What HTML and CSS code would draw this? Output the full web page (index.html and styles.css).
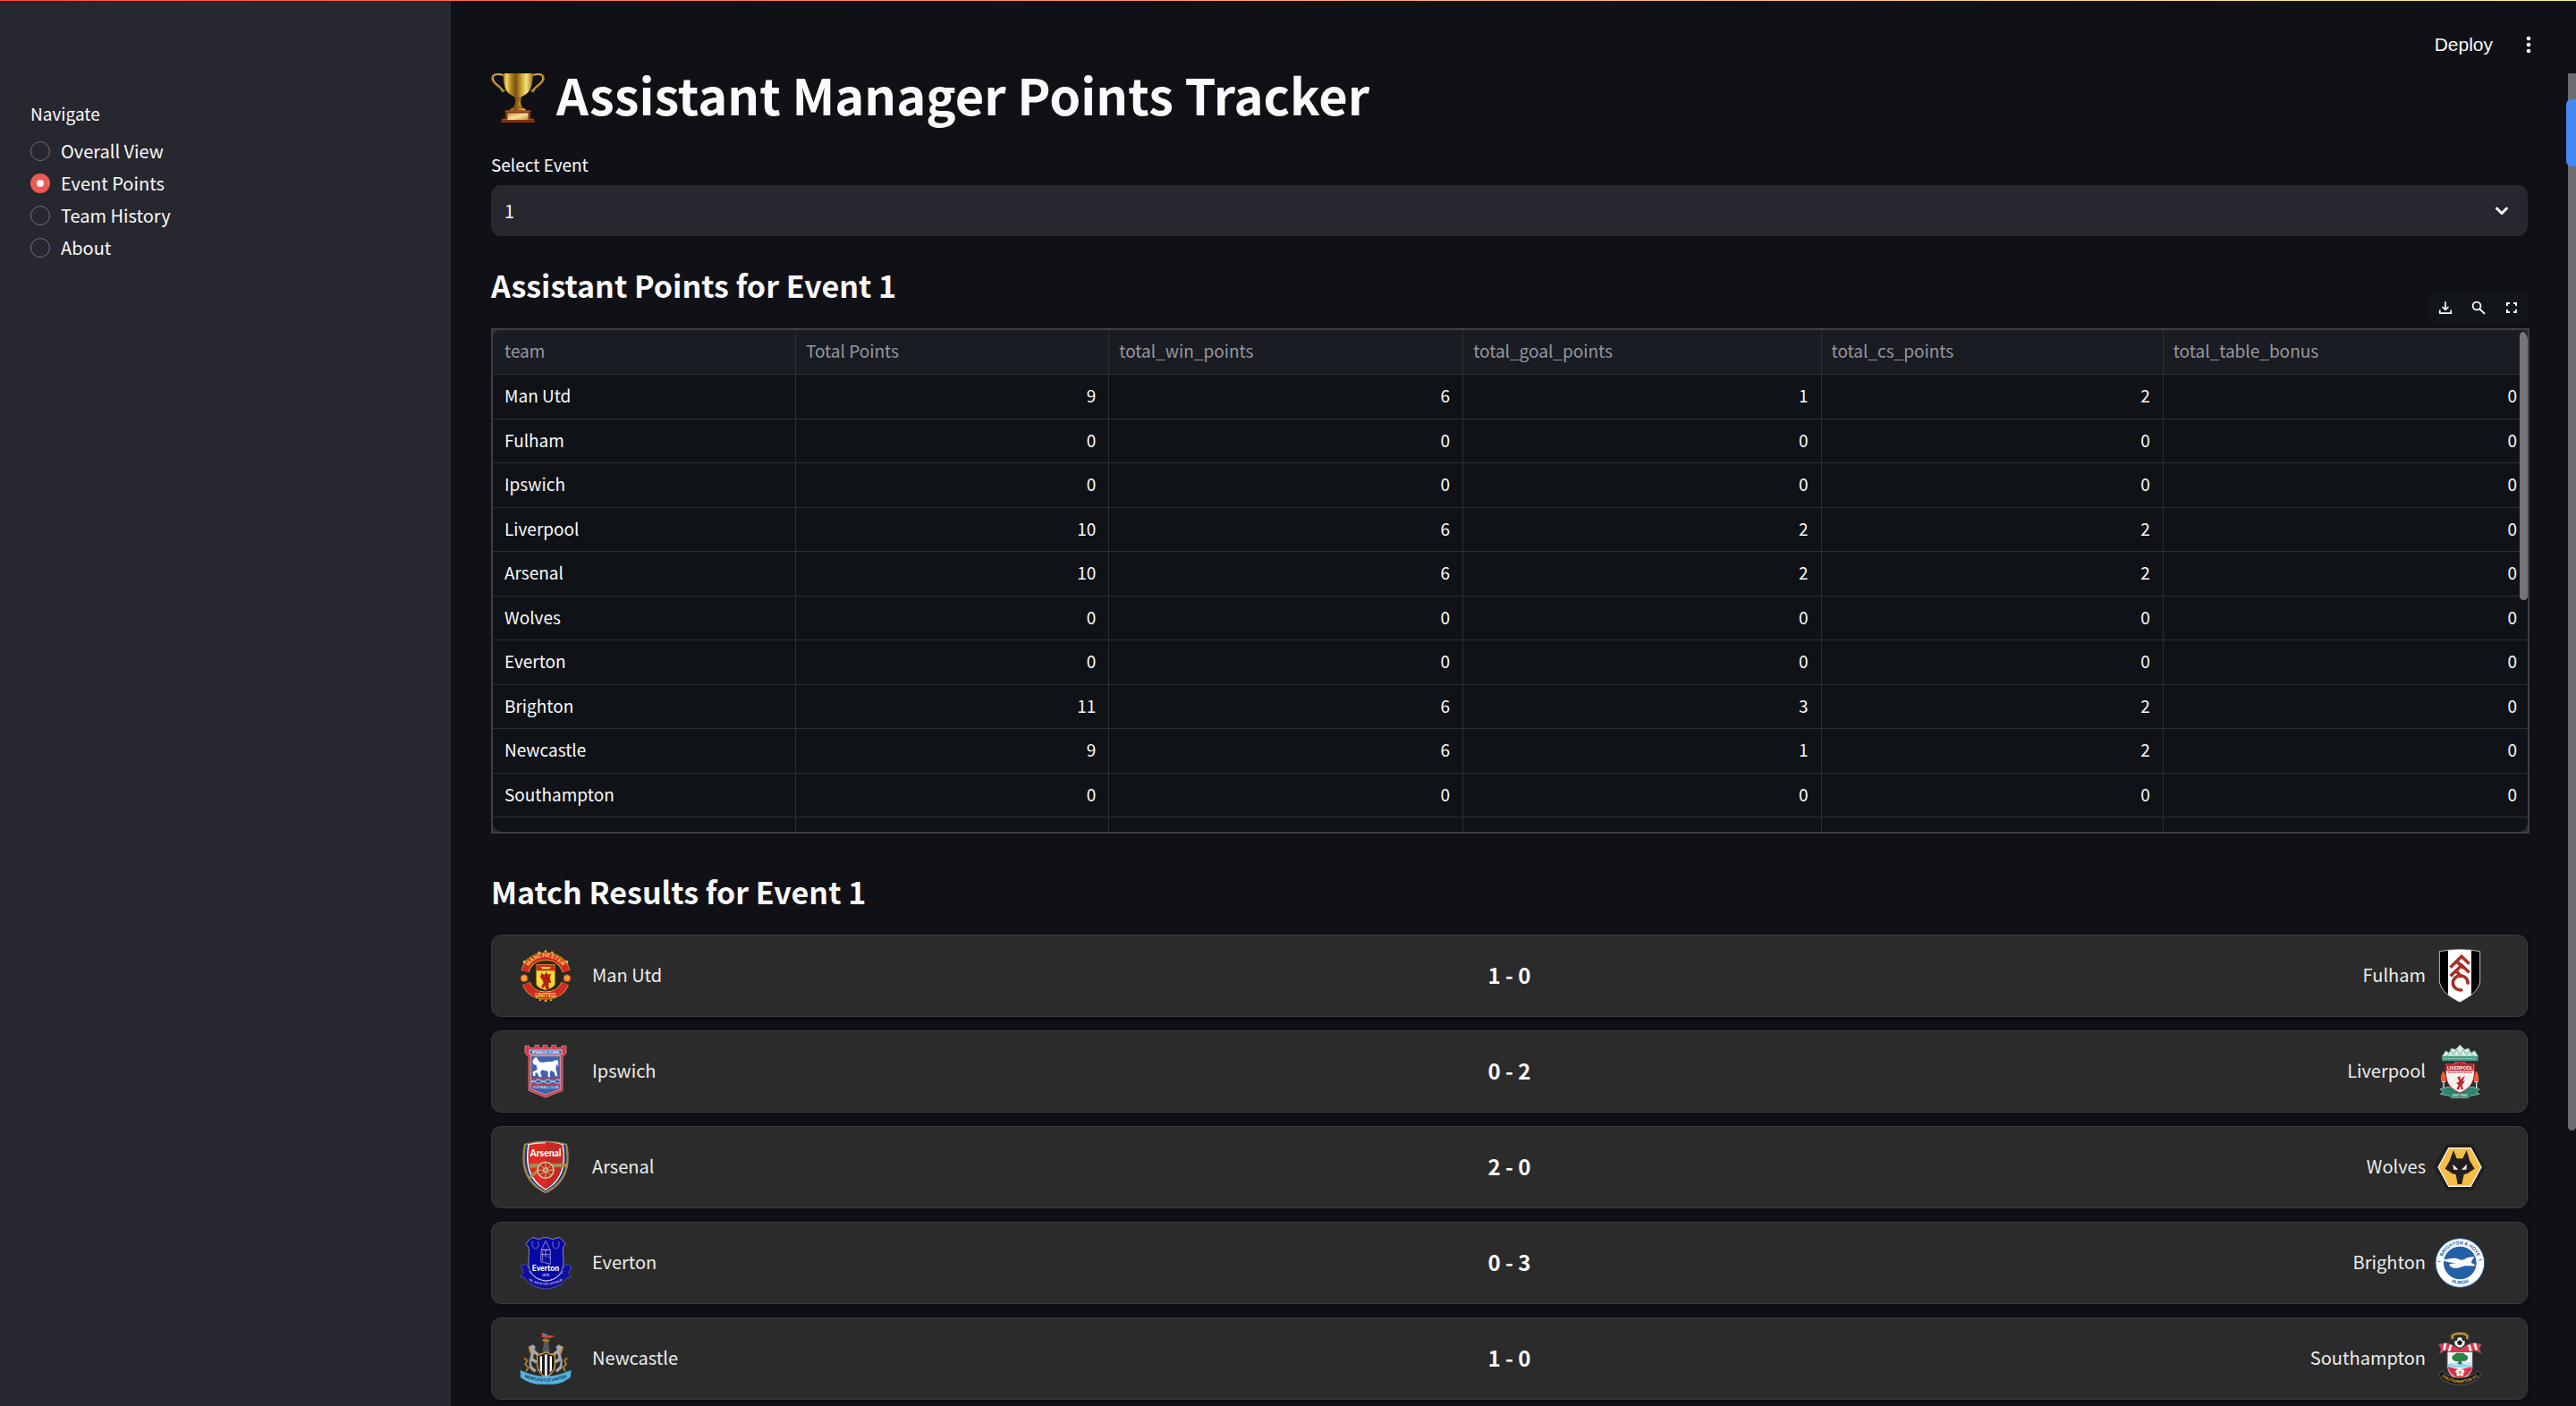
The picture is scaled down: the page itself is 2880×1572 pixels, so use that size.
FILE: index.html
```html
<!DOCTYPE html>
<html lang="en">
<head>
<meta charset="utf-8">
<title>Assistant Manager Points Tracker</title>
<link rel="stylesheet" href="styles.css">
</head>
<body>
<div class="app">
  <aside class="sidebar">
    <fieldset class="nav">
      <legend class="nav-title">Navigate</legend>
      <label class="nav-item"><input class="radio" type="radio" name="page"><span>Overall View</span></label>
      <label class="nav-item"><input class="radio" type="radio" name="page" checked><span>Event Points</span></label>
      <label class="nav-item"><input class="radio" type="radio" name="page"><span>Team History</span></label>
      <label class="nav-item"><input class="radio" type="radio" name="page"><span>About</span></label>
    </fieldset>
  </aside>

  <div class="page">
    <header class="topbar">
      <button class="deploy" type="button">Deploy</button>
      <button class="menu" type="button" aria-label="Main menu">
        <svg width="6" height="20" viewBox="0 0 6 20" fill="#fafafa"><circle cx="3" cy="3" r="2.3"/><circle cx="3" cy="10" r="2.3"/><circle cx="3" cy="17" r="2.3"/></svg>
      </button>
    </header>

    <main class="content">
      <h1 class="title">
        <svg class="trophy" viewBox="30 36 183 170" aria-hidden="true">
          <defs>
            <linearGradient id="gold" x1="0" x2="1" y1="0" y2="0">
              <stop offset="0" stop-color="#9a6a12"/><stop offset=".12" stop-color="#f3d868"/><stop offset=".25" stop-color="#b98a24"/><stop offset=".42" stop-color="#7a5210"/><stop offset=".6" stop-color="#c79a30"/><stop offset=".78" stop-color="#f8e27c"/><stop offset="1" stop-color="#9c6d14"/>
            </linearGradient>
            <linearGradient id="plate" x1="0" x2="1" y1="0" y2="1">
              <stop offset="0" stop-color="#c8963c"/><stop offset=".5" stop-color="#f8e2a0"/><stop offset="1" stop-color="#c48c34"/>
            </linearGradient>
          </defs>
          <g fill="none" stroke-linecap="round">
            <path d="M68 42C48 34 32 40 33 54C34 72 62 80 66 94C67 99 71 98 73 94" stroke="#a87820" stroke-width="7"/>
            <path d="M66 41C48 36 34 42 36 54C38 70 62 78 68 92" stroke="#f0d060" stroke-width="3"/>
            <path d="M172 42C192 34 208 40 207 54C206 72 178 80 174 94C173 99 169 98 167 94" stroke="#a87820" stroke-width="7"/>
            <path d="M174 41C192 36 206 42 204 54C202 70 178 78 172 92" stroke="#f0d060" stroke-width="3"/>
          </g>
          <path d="M70 36H171C171 72 164 97 145 108C139 112 135 114 132 116L130 124C128 134 130 144 135 152L146 158V166H94V158L105 152C110 144 113 134 111 124L109 116C105 114 101 112 95 108C76 97 70 72 70 36Z" fill="url(#gold)"/>
          <path d="M108 117Q120 124 133 117M110 127Q120 131 131 127M94 157Q120 146 146 157" fill="none" stroke="#7a5210" stroke-width="3"/>
          <path d="M77 162H163V190H77Z" fill="#7d3213"/><path d="M77 162H163V167H77Z" fill="#a4532a"/>
          <path d="M66 190H174L180 203H62Z" fill="#84300f"/><path d="M68 190H172V194H67Z" fill="#a54c22"/>
          <path d="M85 171H155V194H85Z" fill="url(#plate)"/>
        </svg>
        <span>Assistant Manager Points Tracker</span>
      </h1>

      <label class="field-label" for="event">Select Event</label>
      <div class="select-box">
        <select class="select" id="event"><option>1</option></select>
        <svg class="chevron" width="16" height="10" viewBox="0 0 16 10" fill="none" stroke="#fafafa" stroke-width="3" stroke-linecap="round" stroke-linejoin="round"><path d="M2.500 2L8 7.500L13.500 2"/></svg>
      </div>

      <h2 class="heading">Assistant Points for Event 1</h2>

      <section class="frame">
        <div class="toolbar">
          <button type="button" aria-label="Download"><svg viewBox="0 0 16 16" fill="none" stroke="#fafafa" stroke-width="1.700"><path d="M8 1.200V10M4.500 7L8 10.400L11.500 7M1.800 10.500V14.200H14.200V10.500"/></svg></button>
          <button type="button" aria-label="Search"><svg viewBox="0 0 16 16" fill="none" stroke="#fafafa" stroke-width="1.800"><circle cx="6" cy="6" r="4.400"/><path d="M9.300 9.300L15 15"/></svg></button>
          <button type="button" aria-label="Fullscreen"><svg viewBox="0 0 16 16" fill="none" stroke="#fafafa" stroke-width="2"><path d="M3 6V3H6M10 3H13V6M13 10V13H10M6 13H3V10"/></svg></button>
        </div>
        <div class="grid">
          <table class="data">
            <colgroup><col class="c1"><col class="c2"><col class="c3"><col class="c4"><col class="c5"><col></colgroup>
            <thead><tr><th>team</th><th>Total Points</th><th>total_win_points</th><th>total_goal_points</th><th>total_cs_points</th><th>total_table_bonus</th></tr></thead>
            <tbody>
              <tr><td>Man Utd</td><td>9</td><td>6</td><td>1</td><td>2</td><td>0</td></tr>
              <tr><td>Fulham</td><td>0</td><td>0</td><td>0</td><td>0</td><td>0</td></tr>
              <tr><td>Ipswich</td><td>0</td><td>0</td><td>0</td><td>0</td><td>0</td></tr>
              <tr><td>Liverpool</td><td>10</td><td>6</td><td>2</td><td>2</td><td>0</td></tr>
              <tr><td>Arsenal</td><td>10</td><td>6</td><td>2</td><td>2</td><td>0</td></tr>
              <tr><td>Wolves</td><td>0</td><td>0</td><td>0</td><td>0</td><td>0</td></tr>
              <tr><td>Everton</td><td>0</td><td>0</td><td>0</td><td>0</td><td>0</td></tr>
              <tr><td>Brighton</td><td>11</td><td>6</td><td>3</td><td>2</td><td>0</td></tr>
              <tr><td>Newcastle</td><td>9</td><td>6</td><td>1</td><td>2</td><td>0</td></tr>
              <tr><td>Southampton</td><td>0</td><td>0</td><td>0</td><td>0</td><td>0</td></tr>
              <tr class="cut"><td></td><td></td><td></td><td></td><td></td><td></td></tr>
            </tbody>
          </table>
          <div class="grid-thumb"></div>
        </div>
      </section>

      <h2 class="heading results-heading">Match Results for Event 1</h2>

      <section class="matches">
        <article class="match">
          <div class="team home">
            <svg class="crest" viewBox="30 33 180 180" aria-hidden="true">
              <path id="mu-top" d="M55 109A67 67 0 0 1 184 109" fill="none"/>
              <g fill="#e8c22c"><circle cx="120" cy="41" r="4"/><circle cx="98" cy="45" r="4"/><circle cx="142" cy="45" r="4"/><circle cx="50" cy="77" r="6"/><circle cx="190" cy="77" r="6"/><circle cx="120" cy="207" r="4"/><circle cx="102" cy="205" r="3"/><circle cx="138" cy="205" r="3"/></g>
              <ellipse cx="119" cy="124" rx="56" ry="62" fill="#2a2418"/>
              <path d="M51 108C60 76 84 58 120 58S180 76 189 108" fill="none" stroke="#e8c22c" stroke-width="28"/>
              <path d="M51 108C60 76 84 58 120 58S180 76 189 108" fill="none" stroke="#d02a22" stroke-width="24"/>
              <path d="M55 149C66 176 88 189 119 189S174 176 185 149" fill="none" stroke="#e8c22c" stroke-width="27"/>
              <path d="M55 149C66 176 88 189 119 189S174 176 185 149" fill="none" stroke="#d02a22" stroke-width="23"/>
              <g stroke="#d02a22" stroke-width="3" fill="#f0a52c"><circle cx="48" cy="131" r="12"/><circle cx="192" cy="131" r="12"/></g>
              <path d="M88 84H152V150C150 162 130 168 120 172C110 168 90 162 88 150Z" fill="#f8dc2c" stroke="#6b3d10" stroke-width="2"/>
              <path d="M90 86H150V106H90Z" fill="#cf2822"/><path d="M104 93H138L133 100H108Z" fill="#f8dc2c"/>
              <path d="M106 113L116 120L122 111L130 119L139 115L134 130L138 146L129 148L132 166L122 170L117 157L111 166L106 158L113 146L108 135L102 128Z" fill="#b81e1c"/>
              <g fill="#f8dc4c" font-size="19" class="crest-text"><text text-anchor="middle"><textPath href="#mu-top" startOffset="50%">MANCHESTER</textPath></text><text x="120" y="194" text-anchor="middle">UNITED</text></g>
            </svg>
            <span>Man Utd</span>
          </div>
          <strong class="score">1 - 0</strong>
          <div class="team away">
            <span>Fulham</span>
            <svg class="crest" viewBox="60 33 180 180" aria-hidden="true">
              <clipPath id="ful-clip"><path d="M82 41Q150 29 218 41V144C210 178 184 192 150 211C116 192 90 178 82 144Z"/></clipPath>
              <g clip-path="url(#ful-clip)"><path d="M80 30H220V215H80Z" fill="#000"/><path d="M111 30H189V215H111Z" fill="#fff"/></g>
              <path d="M82 41Q150 29 218 41V144C210 178 184 192 150 211C116 192 90 178 82 144Z" fill="none" stroke="#ddd" stroke-width="2.500"/>
              <g fill="none" stroke="#3b2a28" stroke-width="10"><path d="M119 95L156 58L182 83M140 75L164 98M119 124L157 88L182 112M137 106L156 126"/><path d="M177 150A25 24 0 1 0 158 170"/></g>
              <g fill="none" stroke="#c9271f" stroke-width="7"><path d="M120 94L156 58L181 82M140 75L164 98M120 123L157 88L181 111M137 106L156 126"/><path d="M177 152A25 24 0 1 0 160 170"/></g>
            </svg>
          </div>
        </article>

        <article class="match">
          <div class="team home">
            <svg class="crest" viewBox="30 54 180 180" aria-hidden="true">
              <path d="M51 58H65V65H84V56H98V65H111V56H126V65H140V56H155V65H174V58H189V82L177 96V208L120 231L63 208V96L51 82Z" fill="#d63a47" stroke="#eaa0a6" stroke-width="2"/>
              <path d="M71 92H169V203L120 222L71 203Z" fill="#3d64ad" stroke="#f0c8cc" stroke-width="2"/>
              <path d="M66 72H174V87H66Z" fill="#3d64ad" stroke="#fff" stroke-width="2"/>
              <text x="120" y="84" text-anchor="middle" font-size="12" fill="#fff" class="crest-text">IPSWICH TOWN</text>
              <path d="M76 112L80 102L88 95L92 101L98 110C108 117 124 109 138 111C148 111 150 104 158 106C166 110 160 118 164 128L157 119C155 130 152 135 157 143L160 160H153L149 147L139 140L134 146L135 162L128 163L128 143L108 139L102 146L107 162H99L92 148L84 150L86 159L78 158L77 145L92 138L89 122L80 121Z" fill="#fff"/>
              <path d="M72 168H168" stroke="#d63a47" stroke-width="3"/><path d="M72 174Q80 182 88 174T104 174T120 174T136 174T152 174T168 174M72 181Q80 173 88 181T104 181T120 181T136 181T152 181T168 181" fill="none" stroke="#fff" stroke-width="2"/><path d="M72 187H168" stroke="#d63a47" stroke-width="3"/>
              <text x="120" y="201" text-anchor="middle" font-size="10" fill="#cdd8ee" class="crest-text">FOOTBALL CLUB</text>
            </svg>
            <span>Ipswich</span>
          </div>
          <strong class="score">0 - 2</strong>
          <div class="team away">
            <span>Liverpool</span>
            <svg class="crest" viewBox="60 354 180 180" aria-hidden="true">
              <path d="M91 393L103 374L114 381L122 366L136 370L145 361L151 354L157 361L166 370L180 366L188 381L200 374L212 393Z" fill="#dcebe5" stroke="#4fa28e" stroke-width="2"/>
              <path d="M108 391L120 374L129 388L140 371L151 388L162 371L173 388L184 375L194 391" fill="none" stroke="#6fb3a2" stroke-width="3"/>
              <path d="M90 393H212V409H90Z" fill="#439985"/><path d="M97 401H205" stroke="#d6ece5" stroke-width="3" stroke-dasharray="4 3"/>
              <g fill="#f25a32"><path d="M95 442Q107 460 103 480H89Q82 460 95 442Z"/><path d="M206 442Q218 460 212 480H198Q194 460 206 442Z"/></g>
              <path d="M91 479H102M200 479H211M96 482V502M206 482V502" stroke="#eee" stroke-width="4"/>
              <path d="M84 503L108 496L194 496L216 503L206 514L216 520L184 526L177 533H123L116 526L85 520L95 513Z" fill="#2b8570" stroke="#b9d8cf" stroke-width="2"/>
              <path d="M103 418L126 420Q138 409 151 412Q164 409 176 420L199 418V450C198 480 184 502 151 516C116 502 104 480 103 450Z" fill="#f4f1ee" stroke="#a8242e" stroke-width="3"/>
              <path d="M105 419L128 421Q151 404 175 421L197 419V442H105Z" fill="#bc2531"/>
              <text x="151" y="437" text-anchor="middle" font-size="15" fill="#fff" class="crest-text">LIVERPOOL</text>
              <path d="M110 447H192" stroke="#c34c54" stroke-width="4" stroke-dasharray="4 2"/>
              <path d="M141 463L153 460L151 472L168 458L160 477L168 475L158 490L162 504H154L153 492L147 505H139L146 489L138 482L149 478Z" fill="#ba2935"/>
              <text x="151" y="528" text-anchor="middle" font-size="11" fill="#d8ebe5" class="crest-text">EST·1892</text>
            </svg>
          </div>
        </article>

        <article class="match">
          <div class="team home">
            <svg class="crest" viewBox="30 375 180 180" aria-hidden="true">
              <path d="M48 386Q120 367 192 386C206 450 196 518 120 553C44 518 34 450 48 386Z" fill="#9c8350"/>
              <path d="M54 391Q120 374 186 391C197 450 188 512 120 545C52 512 43 450 54 391Z" fill="#153f80"/>
              <path d="M61 388Q120 376 179 388C189 450 183 508 120 542C57 508 51 450 61 388Z" fill="#fff"/>
              <path d="M65 390Q120 379 175 390C185 450 177 504 120 538C63 504 55 450 65 390Z" fill="#de2b23"/>
              <path d="M120 380Q148 381 175 390C185 450 177 504 120 538Z" fill="#c42a25"/>
              <path d="M64 453L110 452L195 453V465H110L62 467L70 460ZM112 468L69 503L60 499L99 466Z" fill="#a58a55"/>
              <circle cx="120" cy="475" r="27" fill="#c42a25" stroke="#d5bd8a" stroke-width="5"/>
              <path d="M120 450V500M95 475H145M102 457L138 493M138 457L102 493" stroke="#d5bd8a" stroke-width="3"/><circle cx="120" cy="475" r="8" fill="#a58a55" stroke="#e5d3a8" stroke-width="3"/>
              <text x="120" y="429" text-anchor="middle" font-size="31" fill="#fff" class="crest-name">Arsenal</text>
            </svg>
            <span>Arsenal</span>
          </div>
          <strong class="score">2 - 0</strong>
          <div class="team away">
            <span>Wolves</span>
            <svg class="crest" viewBox="60 675 180 180" aria-hidden="true">
              <path d="M106 687H194L239 765L194 843H106L61 765Z" fill="#231f20"/>
              <path d="M112 699H188L224 765L188 831H112L76 765Z" fill="#fff"/>
              <path d="M114 703H186L220 765L186 827H114L80 765Z" fill="#f4bd43"/>
              <path d="M129 708L140 736H160L173 708L184 744L200 770L176 786L164 790L157 822H143L137 790L124 786L101 770L116 744Z" fill="#231f20"/>
              <path d="M127 755L145 773H130ZM174 755L156 773H172Z" fill="#fff"/>
            </svg>
          </div>
        </article>

        <article class="match">
          <div class="team home">
            <svg class="crest" viewBox="30 66 180 180" aria-hidden="true">
              <path id="eve-ring" d="M42 188C66 244 176 244 199 188" fill="none"/>
              <path d="M36 165L55 159L64 175Q120 240 178 175L188 159L207 168L197 190L205 202L190 208C172 232 152 240 121 243C88 240 68 232 51 208L36 202L45 188Z" fill="#10109c" stroke="#6c6cae" stroke-width="2"/>
              <path d="M54 91L75 70L98 77Q120 64 142 77L165 70L187 91L178 106C178 142 186 168 166 194C152 213 133 213 121 219C107 213 88 211 75 194C56 170 65 140 64 106Z" fill="#0808a4" stroke="#c0c0e0" stroke-width="2"/>
              <path d="M66 184Q88 214 121 215T178 184" fill="none" stroke="#fff" stroke-width="3" stroke-dasharray="6 2"/>
              <path d="M76 84Q72 106 86 108Q99 106 95 84M144 84Q142 106 155 108Q168 106 164 84" fill="none" stroke="#8080c8" stroke-width="4" stroke-dasharray="3 2"/>
              <path d="M120 82L135 112H106ZM105 113H136V160L104 152ZM105 128H136M120 114V138M110 119V150M128 132L136 142" fill="none" stroke="#c4c4e8" stroke-width="2"/>
              <text x="120" y="184" text-anchor="middle" font-size="26" fill="#fff" class="crest-name">Everton</text>
              <text x="120" y="202" text-anchor="middle" font-size="11" fill="#c8c8ea" class="crest-text">1878</text>
              <text font-size="10" fill="#b8b8e4" text-anchor="middle" class="crest-text"><textPath href="#eve-ring" startOffset="50%">NIL SATIS NISI OPTIMUM</textPath></text>
            </svg>
            <span>Everton</span>
          </div>
          <strong class="score">0 - 3</strong>
          <div class="team away">
            <span>Brighton</span>
            <svg class="crest" viewBox="60 126 180 180" aria-hidden="true">
              <path id="bri-top" d="M89 216A62 62 0 0 1 213 216" fill="none"/>
              <path id="bri-bottom" d="M80 216A71 71 0 0 0 222 216" fill="none"/>
              <circle cx="151" cy="216" r="82" fill="#fff" stroke="#2460a8" stroke-width="3"/>
              <circle cx="151" cy="216" r="55" fill="#2460a8"/>
              <g fill="#2460a8" font-size="16" class="crest-text" text-anchor="middle"><text><textPath href="#bri-top" startOffset="50%">BRIGHTON &amp; HOVE</textPath></text><text><textPath href="#bri-bottom" startOffset="50%">ALBION</textPath></text></g>
              <path d="M77 211H86M214 207L224 205" stroke="#2460a8" stroke-width="3"/>
              <path d="M90 207C106 204 124 199 139 201C149 204 154 208 164 205C173 199 185 195 199 196C195 203 188 210 189 217C194 218 198 221 203 225C188 228 172 224 160 228C147 234 129 236 121 229C117 226 112 222 118 219L138 217C122 214 103 214 90 207Z" fill="#fff"/><path d="M187 222L203 225L192 228Z" fill="#efb045"/>
            </svg>
          </div>
        </article>

        <article class="match">
          <div class="team home">
            <svg class="crest" viewBox="30 387 180 180" aria-hidden="true">
              <path id="new-rib" d="M42 537Q120 570 199 537" fill="none"/>
              <path d="M113 434L115 422H129L131 434L134 455H109Z" fill="#59595d"/><path d="M108 413L119 409L134 414L130 422H114Z" fill="#a9781e"/>
              <path d="M107 391L123 398L152 401L134 409L108 406Z" fill="#df4038"/><path d="M108 390L126 395L117 404Z" fill="#547fae"/>
              <path d="M62 437L77 429L87 437L84 448L98 459L93 468L82 462L79 475L93 485L88 494L72 486L75 503L91 517L82 524L65 509L64 483L70 461L66 450Z" fill="#a6a7ab" stroke="#303033" stroke-width="2"/>
              <path d="M179 437L164 429L154 437L157 448L143 459L148 468L159 462L162 475L148 485L153 494L169 486L166 503L150 517L159 524L176 509L177 483L171 461L175 450Z" fill="#a6a7ab" stroke="#303033" stroke-width="2"/>
              <path d="M48 475L58 483L52 496L62 507L54 520M193 475L183 483L189 496L179 507L187 520M64 437Q68 455 72 462M178 437Q173 455 169 462" fill="none" stroke="#bd862a" stroke-width="5"/>
              <path d="M92 465Q106 464 121 455Q136 464 151 465V500C149 522 134 532 121 541C108 532 94 522 92 500Z" fill="#191919" stroke="#d9a33c" stroke-width="4"/>
              <path d="M101 469H108V526L101 516ZM117 463H125V535L121 537L117 535ZM134 469H141V516L134 526Z" fill="#fff"/>
              <path d="M35 516L50 522Q120 551 191 521L206 516L203 541L191 548Q175 560 148 563H94Q67 560 51 550L36 541Z" fill="#52b3df"/>
              <text font-size="14" fill="#172e44" text-anchor="middle" class="crest-text"><textPath href="#new-rib" startOffset="50%">NEWCASTLE UNITED</textPath></text>
            </svg>
            <span>Newcastle</span>
          </div>
          <strong class="score">1 - 0</strong>
          <div class="team away">
            <span>Southampton</span>
            <svg class="crest" viewBox="60 447 180 180" aria-hidden="true">
              <path id="sou-rib" d="M91 599Q150 638 211 599" fill="none"/>
              <path d="M126 474Q112 452 150 450Q189 452 175 474" fill="none" stroke="#4a4a4a" stroke-width="10"/><path d="M128 470Q118 455 150 453Q182 455 173 470" fill="none" stroke="#d99b20" stroke-width="6"/>
              <path d="M79 490L105 484L130 494L150 506L172 492L198 484L223 490L215 503L222 519L200 510L176 516H125L103 509L83 520L88 503Z" fill="#e6374c" stroke="#666" stroke-width="2"/>
              <path d="M102 486L97 508M121 491L114 512M181 491L187 512M200 486L206 508" stroke="#fff" stroke-width="8"/>
              <circle cx="150" cy="483" r="18" fill="#fff" stroke="#333" stroke-width="2"/><path d="M150 475L159 481L156 491H144L141 481ZM134 472L141 467L144 472L137 479ZM159 467L166 472L163 479L156 472ZM134 492L141 495L142 501ZM166 492L159 495L158 501Z" fill="#171717"/>
              <path d="M108 514H193V565C191 590 170 604 150 611C130 604 110 590 108 565Z" fill="#f5f5f5" stroke="#555" stroke-width="3"/>
              <path d="M111 551H190V568H111Z" fill="#92d2ef"/><path d="M111 554Q120 548 130 554T150 554T170 554T190 554" fill="none" stroke="#fff" stroke-width="3"/>
              <path d="M110 565L150 574L191 565Q190 590 150 607Q112 590 110 565Z" fill="#df3043"/>
              <path d="M128 541Q121 530 133 524Q140 516 151 520Q165 517 168 525Q181 530 174 540Q166 548 157 542L155 555H146L147 544Q138 548 128 541Z" fill="#298744" stroke="#154b27" stroke-width="2"/>
              <g fill="#fff"><circle cx="151" cy="573" r="6"/><circle cx="142" cy="580" r="6"/><circle cx="160" cy="580" r="6"/><circle cx="145" cy="590" r="6"/><circle cx="157" cy="590" r="6"/></g><circle cx="151" cy="582" r="4" fill="#d9a520"/>
              <path d="M80 589L90 578L102 588Q150 616 199 588L211 578L221 589L208 608Q181 625 150 625T91 608Z" fill="#171717" stroke="#777" stroke-width="2"/>
              <text font-size="14" fill="#dca52a" text-anchor="middle" class="crest-text"><textPath href="#sou-rib" startOffset="50%">SOUTHAMPTON FC</textPath></text>
            </svg>
          </div>
        </article>
      </section>
    </main>
  </div>
</div>
<div class="stripe"></div>
<div class="page-thumb"></div>
<div class="side-tab"></div>
</body>
</html>
```
FILE: styles.css
```css
* { box-sizing: border-box; }

body {
  margin: 0;
  height: 100vh;
  overflow: hidden;
  background: #101116;
  color: #fafafa;
  font-family: "Noto Sans CJK SC", "Open Sans", sans-serif;
  font-size: 20px;
}

button, select { font: inherit; color: inherit; border: 0; background: none; padding: 0; margin: 0; }

.app { display: flex; min-height: 100vh; align-items: stretch; }

.stripe {
  position: absolute;
  inset: 0 0 auto 0;
  height: 1px;
  background: linear-gradient(90deg, #ff4b4b, #fffd80);
}

/* Sidebar */
.sidebar { flex: 0 0 504px; background: #27272f; padding: 113px 34px 0; }
.nav { border: 0; margin: 0; padding: 0; }
.nav-title { padding: 0; font-size: 19px; line-height: 28px; margin-bottom: 10px; }
.nav-item { display: flex; align-items: center; gap: 12px; height: 36px; line-height: 36px; }
.radio {
  appearance: none;
  width: 22px;
  height: 22px;
  margin: 0;
  border: 1px solid #6f7077;
  border-radius: 50%;
}
.radio:checked { border: 7px solid #ee5a52; background: #f3f3f8; }

/* Top bar */
.page { flex: 1; min-width: 0; }
.topbar { display: flex; justify-content: flex-end; align-items: flex-start; gap: 37px; height: 82px; padding: 36px 50px 0 45px; }
.deploy { font-family: "Liberation Sans", Arial, sans-serif; font-size: 21px; line-height: 28px; }
.menu { display: flex; align-items: center; height: 28px; }

/* Content */
.content { padding: 0 54px 0 45px; }
.title { display: flex; align-items: flex-start; gap: 12px; margin: 0 0 34px; font-size: 56px; line-height: 46px; height: 56px; font-weight: 700; }
.trophy { width: 61px; height: 56px; }
.field-label { display: block; font-size: 19px; line-height: 24px; margin-bottom: 11px; }
.select-box { position: relative; }
.select { appearance: none; display: block; width: 100%; height: 57px; padding: 0 15px; border-radius: 11px; background: #27272f; }
.chevron { position: absolute; right: 21px; top: 24px; pointer-events: none; }
.heading { margin: 31px 0 24px; font-size: 34px; line-height: 48px; font-weight: 700; }
.results-heading { margin-top: 41px; }

/* Points table */
.frame { position: relative; border: 2px solid #404040; background: #2b2b2b; margin-right: -2px; }
.grid { position: relative; border-radius: 11px; overflow: hidden; background: #0f1216; }
.data { width: 100%; table-layout: fixed; border-collapse: separate; border-spacing: 0; font-size: 19px; line-height: 24px; }
.c1 { width: 14.9%; }
.c2 { width: 15.4%; }
.c3 { width: 17.4%; }
.c4 { width: 17.6%; }
.c5 { width: 16.8%; }
.data th, .data td { padding: 0 14px 3px 11px; border-right: 1px solid #2d2f34; border-bottom: 1px solid #2d2f34; text-align: right; font-weight: 400; }
.data th:first-child, .data td:first-child { padding-left: 13px; }
.data th:last-child, .data td:last-child { border-right: 0; padding-right: 12px; }
.data th { height: 50px; background: #1a1c24; color: #96979c; text-align: left; }
.data td { height: 49px; }
.data tr:nth-child(odd) td { height: 50px; }
.data td:first-child { text-align: left; }
.data .cut td, .data tr.cut:nth-child(odd) td { height: 16px; border-bottom: 0; }
.grid-thumb { position: absolute; top: 2px; right: 0; width: 9px; height: 300px; border-radius: 5px; background: #747578; }

.toolbar {
  position: absolute;
  right: 0;
  top: -44px;
  display: flex;
  align-items: center;
  justify-content: space-around;
  width: 111px;
  height: 37px;
  border-radius: 11px;
  background: #13151d;
}
.toolbar button { display: flex; }
.toolbar svg { width: 16px; height: 16px; }

/* Match cards */
.matches { display: flex; flex-direction: column; gap: 15px; }
.match {
  display: grid;
  grid-template-columns: 1fr auto 1fr;
  align-items: center;
  height: 92px;
  padding: 0 30px;
  border: 1px solid #3a3a3a;
  border-radius: 11px;
  background: #2b2b2b;
  box-shadow: 0 3px 6px rgba(0, 0, 0, .2);
}
.team { display: flex; align-items: center; color: #ececec; }
.team span, .score { padding-bottom: 3px; }
.home { gap: 22px; }
.away { gap: 8px; justify-content: flex-end; padding-right: 15px; }
.score { font-size: 24px; line-height: 32px; }
.crest { width: 60px; height: 60px; flex: none; }
.crest-text { font-family: "Liberation Sans", Arial, sans-serif; font-weight: 700; }
.crest-name { font-family: "Lato", sans-serif; font-weight: 900; }

/* Window edge */
.page-thumb { position: absolute; right: 0; top: 82px; bottom: 308px; width: 9px; border-radius: 0 0 5px 5px; background: #6b6c70; }
.side-tab { position: absolute; right: 0; top: 111px; width: 11px; height: 75px; border-radius: 6px 0 0 6px; background: #4489f4; }
```
